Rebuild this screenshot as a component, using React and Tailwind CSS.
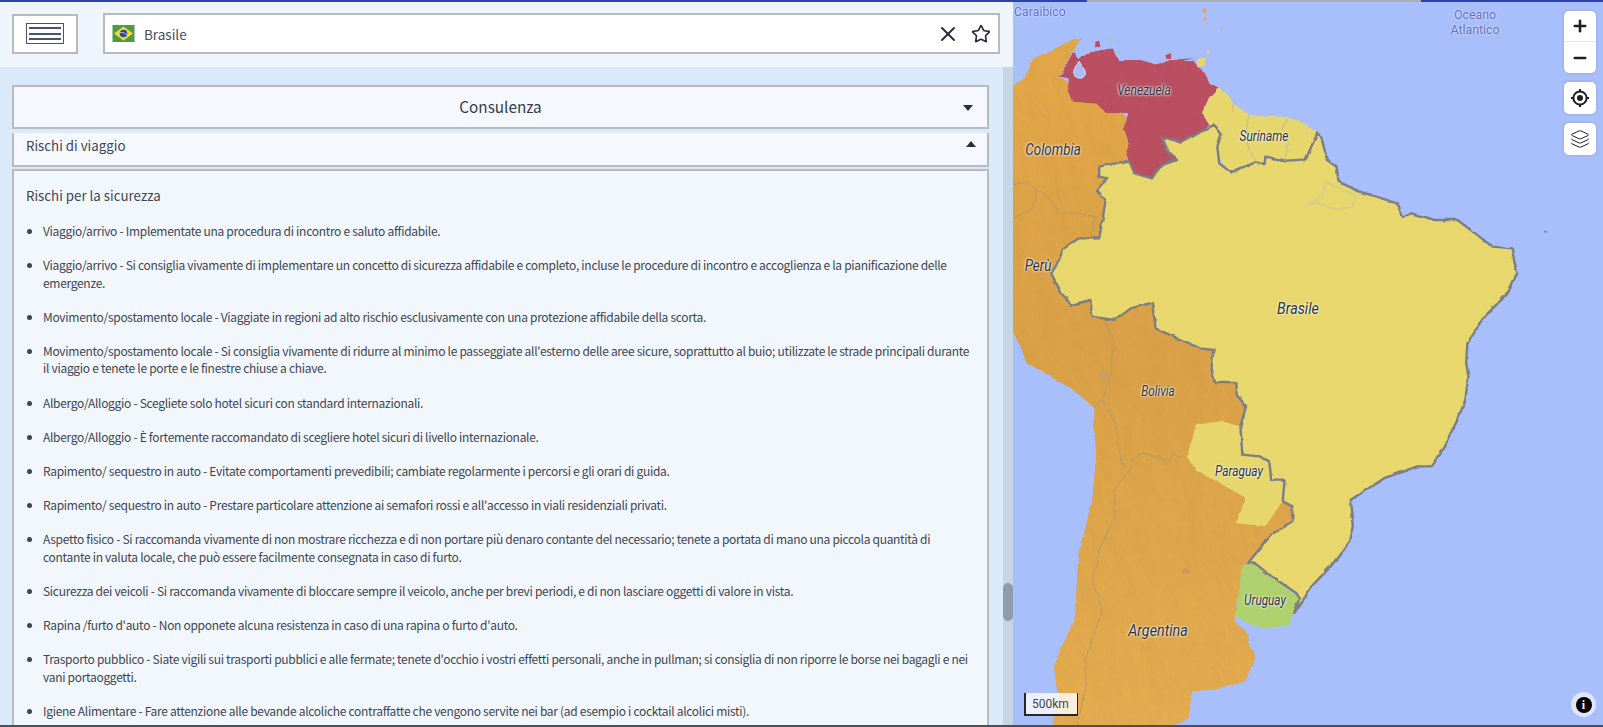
import React from 'react';
import { X, Star, Plus, Minus, Layers } from 'lucide-react';

const items = [
  "Viaggio/arrivo - Implementate una procedura di incontro e saluto affidabile.",
  "Viaggio/arrivo - Si consiglia vivamente di implementare un concetto di sicurezza affidabile e completo, incluse le procedure di incontro e accoglienza e la pianificazione delle\nemergenze.",
  "Movimento/spostamento locale - Viaggiate in regioni ad alto rischio esclusivamente con una protezione affidabile della scorta.",
  "Movimento/spostamento locale - Si consiglia vivamente di ridurre al minimo le passeggiate all'esterno delle aree sicure, soprattutto al buio; utilizzate le strade principali durante\nil viaggio e tenete le porte e le finestre chiuse a chiave.",
  "Albergo/Alloggio - Scegliete solo hotel sicuri con standard internazionali.",
  "Albergo/Alloggio - È fortemente raccomandato di scegliere hotel sicuri di livello internazionale.",
  "Rapimento/ sequestro in auto - Evitate comportamenti prevedibili; cambiate regolarmente i percorsi e gli orari di guida.",
  "Rapimento/ sequestro in auto - Prestare particolare attenzione ai semafori rossi e all'accesso in viali residenziali privati.",
  "Aspetto fisico - Si raccomanda vivamente di non mostrare ricchezza e di non portare più denaro contante del necessario; tenete a portata di mano una piccola quantità di\ncontante in valuta locale, che può essere facilmente consegnata in caso di furto.",
  "Sicurezza dei veicoli - Si raccomanda vivamente di bloccare sempre il veicolo, anche per brevi periodi, e di non lasciare oggetti di valore in vista.",
  "Rapina /furto d'auto - Non opponete alcuna resistenza in caso di una rapina o furto d'auto.",
  "Trasporto pubblico - Siate vigili sui trasporti pubblici e alle fermate; tenete d'occhio i vostri effetti personali, anche in pullman; si consiglia di non riporre le borse nei bagagli e nei\nvani portaoggetti.",
  "Igiene Alimentare - Fare attenzione alle bevande alcoliche contraffatte che vengono servite nei bar (ad esempio i cocktail alcolici misti).",
];

// map shapes: x is zoomed 2.6x, y 3x; second list is the southern half (y + 1089)
const S = 1089;
const pts = (north, south = []) =>
  [...north, ...south.map(([x, y]) => [x, y + S])].map((p) => p.join(',')).join(' ');

const orange = pts(
  [[30, 265], [70, 225], [85, 175], [125, 155], [190, 118], [218, 115], [195, 140], [155, 230], [400, 400], [700, 1000]],
  [[700, 300], [740, 420], [760, 430], [760, 475], [710, 510], [680, 550], [645, 600], [630, 610], [615, 720], [610, 775], [650, 815], [645, 840], [665, 880], [640, 950], [560, 980], [500, 985], [490, 1070], [455, 1085], [405, 1095], [135, 1095], [150, 1000], [140, 910], [165, 840], [195, 760], [200, 640], [205, 560], [225, 480], [240, 400], [250, 280], [245, 200], [245, 135], [210, 95], [130, 40], [70, 0]]
).concat(' 30,985');

const venezuela = pts([[155, 230], [190, 155], [205, 175], [215, 165], [250, 155], [290, 148], [310, 180], [370, 180], [410, 195], [440, 180], [500, 180], [530, 215], [545, 250], [568, 262], [545, 290], [525, 340], [545, 375], [520, 400], [470, 428], [420, 410], [440, 460], [460, 480], [420, 495], [395, 535], [350, 520], [325, 455], [335, 430], [322, 385], [333, 340], [275, 340], [255, 312], [190, 305], [178, 270], [178, 235]]);

const guianas = pts([[568, 262], [545, 290], [525, 340], [545, 375], [570, 400], [565, 470], [600, 517], [660, 490], [690, 490], [690, 470], [745, 482], [795, 478], [825, 400], [790, 370], [745, 350], [690, 350], [650, 345], [610, 315], [590, 280]]);

const paraguay = pts([], [[510, 185], [575, 175], [625, 190], [630, 275], [675, 280], [700, 295], [705, 350], [740, 350], [735, 415], [690, 490], [610, 480], [640, 405], [570, 360], [510, 320], [485, 285]]);

const uruguay = pts([], [[630, 610], [660, 598], [700, 635], [778, 705], [765, 750], [745, 790], [690, 800], [640, 780], [612, 755], [620, 680]]);

const brazil = pts(
  [[825, 400], [795, 478], [745, 482], [690, 470], [688, 492], [660, 488], [600, 517], [570, 490], [565, 440], [575, 405], [555, 375], [525, 395], [470, 428], [420, 410], [440, 460], [460, 480], [420, 495], [395, 535], [350, 520], [335, 482], [258, 500], [258, 530], [278, 535], [252, 570], [275, 600], [258, 715], [205, 715], [165, 745], [150, 790], [133, 820], [160, 880], [185, 915], [235, 900], [240, 950], [300, 960], [340, 925], [395, 908], [405, 985], [470, 1020], [520, 1045], [555, 1050]],
  [[550, 15], [558, 60], [615, 60], [615, 95], [640, 130], [625, 190], [630, 275], [675, 280], [700, 295], [705, 350], [740, 350], [735, 415], [760, 430], [760, 475], [710, 510], [680, 550], [645, 600], [660, 598], [700, 635], [770, 690], [778, 705], [765, 750], [800, 690], [810, 670], [860, 610], [910, 535], [920, 490], [912, 410], [1000, 345], [1085, 310], [1120, 310], [1150, 260], [1190, 170], [1210, 110], [1218, 40], [1212, 0]]
).concat(' ', pts([[1215, 1030], [1260, 950], [1320, 880], [1345, 820], [1330, 745], [1280, 740], [1190, 660], [1130, 660], [1070, 640], [1045, 650], [1035, 610], [935, 575], [880, 545], [875, 500], [850, 480], [835, 410]]));

const borders = [
  pts([[30, 560], [70, 545], [95, 570], [125, 590], [155, 640], [200, 640], [250, 650], [235, 705]]),
  pts([[30, 655], [85, 625], [95, 570]]),
  pts([[270, 960], [295, 1020], [290, 1089]], [[285, 60], [265, 110], [300, 180], [320, 310], [370, 270], [420, 285], [430, 305], [445, 275], [485, 285]]),
  pts([], [[245, 135], [265, 110]]),
  pts([], [[345, 310], [300, 380], [295, 470], [260, 560], [240, 650], [265, 740], [235, 850], [220, 890], [225, 970], [200, 1090]]),
  pts([[605, 335], [610, 315]]),
  pts([[650, 345], [640, 390], [645, 440], [665, 490]]),
  pts([[750, 352], [735, 390], [750, 430], [740, 480]]),
];

const labels = [
  ['Venezuela', 'left-[131px] top-[90px] text-[14px] scale-x-[0.86]'],
  ['Suriname', 'left-[251px] top-[136px] text-[14px] scale-x-[0.85]'],
  ['Colombia', 'left-[40px] top-[150px] text-[16px] scale-x-[0.84]'],
  ['Perù', 'left-[25px] top-[266px] text-[16px] scale-x-[0.84]'],
  ['Brasile', 'left-[285px] top-[308px] text-[17px] scale-x-[0.84]'],
  ['Bolivia', 'left-[145px] top-[391px] text-[14px] scale-x-[0.84]'],
  ['Paraguay', 'left-[226px] top-[471px] text-[14px] scale-x-[0.85]'],
  ['Uruguay', 'left-[252px] top-[600px] text-[14px] scale-x-[0.84]'],
  ['Argentina', 'left-[145px] top-[630px] text-[17px] scale-x-[0.84]'],
];

const BrazilFlag = () => (
  <svg viewBox="0 0 22 17" className="w-[23px] h-[17px]">
    <rect width="22" height="17" fill="#4f9a45" />
    <polygon points="11,1.5 20.5,8.5 11,15.5 1.5,8.5" fill="#f4dc32" />
    <circle cx="11" cy="8.5" r="3.8" fill="#2f4a9c" />
    <path d="M7.5 7.5 C10 7 12.5 8 14.5 10" stroke="#e8eef5" strokeWidth="0.7" fill="none" />
  </svg>
);

const Caret = ({ up }) => (
  <svg viewBox="0 0 10 6" className="w-[10px] h-[6px]" fill="#272d3c">
    <polygon points={up ? '5,0 10,6 0,6' : '0,0 10,0 5,6'} />
  </svg>
);

const Locate = () => (
  <svg viewBox="0 0 20 20" className="w-[20px] h-[20px]" fill="none" stroke="#1c1f26">
    <circle cx="10" cy="10" r="6.6" strokeWidth="2" />
    <circle cx="10" cy="10" r="3" fill="#1c1f26" stroke="none" />
    <path d="M10 1v2.5M10 16.5V19M1 10h2.5M16.5 10H19" strokeWidth="2" />
  </svg>
);

const MapView = () => (
  <div className="relative flex-1 h-full overflow-hidden bg-[#a9bffb]">
    <svg viewBox="33.8 0 1534 2181" preserveAspectRatio="none" className="absolute inset-0 w-full h-full">
      <defs>
        <linearGradient id="land" x1="0" y1="0" x2="0" y2="1">
          <stop offset="0" stopColor="#e0a646" />
          <stop offset="0.45" stopColor="#d89f46" />
          <stop offset="1" stopColor="#e2aa4e" />
        </linearGradient>
        <filter id="relief" x="0" y="0" width="100%" height="100%">
          <feTurbulence type="fractalNoise" baseFrequency="0.012 0.006" numOctaves="4" seed="7" result="n" />
          <feDiffuseLighting in="n" surfaceScale="3" diffuseConstant="1.03" lightingColor="#ffffff" result="l">
            <feDistantLight azimuth="300" elevation="68" />
          </feDiffuseLighting>
          <feComposite in="SourceGraphic" in2="l" operator="arithmetic" k1="1.05" k2="0" k3="0" k4="0" result="c" />
          <feComposite in="c" in2="SourceAlpha" operator="in" />
        </filter>
        <filter id="rough" x="-2%" y="-2%" width="104%" height="104%">
          <feTurbulence type="fractalNoise" baseFrequency="0.03" numOctaves="3" seed="3" result="d" />
          <feDisplacementMap in="SourceGraphic" in2="d" scale="10" xChannelSelector="R" yChannelSelector="G" />
        </filter>
      </defs>
      <g filter="url(#rough)">
        <polygon points={orange} fill="url(#land)" filter="url(#relief)" />
        {borders.slice(0, 5).map((b) => (
          <polyline key={b} points={b} fill="none" stroke="#b79a63" strokeWidth="1" vectorEffect="non-scaling-stroke" />
        ))}
        <ellipse cx="270" cy="1129" rx="14" ry="18" fill="#c2a068" opacity="0.6" />
        <ellipse cx="483" cy="1713" rx="11" ry="8" fill="#c99a58" />
        <polygon points={venezuela} fill="#ba4f61" filter="url(#relief)" />
        <path d="M205 180 C200 195 188 210 192 225 C200 238 218 238 222 222 C222 205 212 192 205 180Z" fill="#a9bffb" stroke="#d8dcf0" strokeWidth="1" vectorEffect="non-scaling-stroke" />
        <polygon points={guianas} fill="#e6d66c" />
        <polygon points={paraguay} fill="#e6d66c" />
        <polygon points={uruguay} fill="#afd16d" />
        <polygon points={brazil} fill="#e7d76c" stroke="#7b7e86" strokeWidth="2.4" strokeLinejoin="round" vectorEffect="non-scaling-stroke" />
        {borders.slice(5).map((b) => (
          <polyline key={b} points={b} fill="none" stroke="#c4b98a" strokeWidth="1" vectorEffect="non-scaling-stroke" />
        ))}
        <path d="M800 612 L835 590 L850 545 L870 560 L925 585 L915 620 L880 628 L850 622 L825 608Z" fill="none" stroke="#d9cd84" strokeWidth="2" vectorEffect="non-scaling-stroke" />
      </g>
      {/* islands */}
      <polygon points="248,125 258,122 261,140 247,142" fill="#ba4f61" />
      <polygon points="512,178 534,172 534,198 512,200" fill="#e6d66c" />
      <polygon points="430,165 445,160 445,178 432,176" fill="#ba4f61" />
      <polygon points="460,178 505,175 470,184" fill="#ba4f61" />
      <polygon points="282,115 292,120 288,128" fill="#afd16d" />
      <polygon points="304,118 311,124 305,127" fill="#afd16d" />
      <polygon points="528,22 538,30 530,42" fill="#e1a648" />
      <polygon points="530,52 538,56 532,68" fill="#e1a648" />
      <polygon points="574,82 580,86 576,92" fill="#e1a648" />
      <polygon points="540,152 548,155 538,162" fill="#e6d66c" />
      <circle cx="1418" cy="695" r="3" fill="#6b7280" />
    </svg>

    {/* sea names */}
    <div className="absolute left-[1px] top-[-11px] text-center text-[13px] leading-[15px] scale-x-[0.95] origin-left text-[#5f6fd0] font-['Roboto',sans-serif] [text-shadow:0_0_2px_#fff]">
      Mare
      <br />
      Caraibico
    </div>
    <div className="absolute left-[462px] top-[7px] -translate-x-1/2 text-center text-[13px] leading-[15px] scale-x-[0.95] text-[#5f6fd0] font-['Roboto',sans-serif] [text-shadow:0_0_2px_#fff]">
      Oceano
      <br />
      Atlantico
    </div>

    {labels.map(([name, cls]) => (
      <div
        key={name}
        className={`absolute -translate-x-1/2 -translate-y-1/2 italic leading-none text-[#2a3040] font-['Roboto',sans-serif] [text-shadow:0_0_2px_#fff,0_0_3px_#fff] ${cls}`}
      >
        {name}
      </div>
    ))}

    {/* map controls */}
    <div className="absolute right-[7px] top-[11px] flex flex-col gap-[9px] w-[32px] text-[#1c1f26]">
      <div className="flex flex-col rounded-[5px] bg-white ring-2 ring-[#a3b6ef]">
        <div className="h-[31px] flex items-center justify-center border-b border-[#e5e7eb]">
          <Plus size={18} strokeWidth={3.4} />
        </div>
        <div className="h-[31px] flex items-center justify-center">
          <Minus size={18} strokeWidth={3.4} />
        </div>
      </div>
      <div className="h-[32px] flex items-center justify-center rounded-[5px] bg-white ring-2 ring-[#a3b6ef]">
        <Locate />
      </div>
      <div className="h-[32px] flex items-center justify-center rounded-[5px] bg-white ring-2 ring-[#a3b6ef]">
        <Layers size={20} strokeWidth={1.2} />
      </div>
    </div>

    {/* scale */}
    <div className="absolute left-[11px] top-[693px] w-[54px] h-[23px] flex items-center pl-[6px] bg-white/80 border-l-2 border-b-2 border-r border-[#23262e] text-[12px] text-[#444] font-['Roboto',sans-serif]">
      500km
    </div>

    {/* attribution */}
    <div className="absolute right-[7px] bottom-[10px] w-[25px] h-[25px] rounded-full bg-[#dfe6fb] flex items-center justify-center">
      <div className="w-[16px] h-[16px] rounded-full bg-black flex items-center justify-center text-white">
        <span className="text-[12px] leading-none font-bold font-['Liberation_Serif',serif]">i</span>
      </div>
    </div>
  </div>
);

const App = () => {
  return (
    <div className="relative flex h-[727px] w-full overflow-hidden font-['Noto_Sans_CJK_SC',sans-serif] text-[#3e4452]">
      <div className="w-[1013px] h-full flex flex-col">
        {/* search header */}
        <header className="h-[67px] shrink-0 flex items-center gap-[25px] pl-[12px] pr-[13px] bg-[#eef5fd]">
          <button className="w-[66px] h-[40px] flex items-center justify-center bg-white border-2 border-[#b7babf]">
            <span className="w-[38px] h-[21px] flex flex-col justify-between py-[3px] px-[2px] border border-[#4a5270]">
              <span className="h-[2px] bg-[#4a5270]" />
              <span className="h-[2px] bg-[#4a5270]" />
              <span className="h-[2px] bg-[#4a5270]" />
            </span>
          </button>
          <div className="flex-1 h-[41px] flex items-center pl-[7px] pr-[7px] bg-white border-2 border-[#b7babf]">
            <BrazilFlag />
            <span className="ml-[9px] text-[13.5px] leading-[18px] text-[#4a5060]">Brasile</span>
            <X size={24} strokeWidth={2} className="ml-auto text-[#272d3c]" />
            <Star size={20} strokeWidth={2} className="ml-[11px] text-[#272d3c]" />
          </div>
        </header>

        {/* scrolling panel */}
        <div className="flex-1 min-h-0 flex bg-[#dbeafa]">
          <div className="flex-1 min-w-0 pl-[12px] pr-[14px] pt-[18px] flex flex-col">
            <div className="h-[44px] shrink-0 flex items-center justify-center relative pb-[2px] bg-[#f5f9ff] border-2 border-[#b7babf] text-[15.3px] leading-[22px] text-[#353b49]">
              Consulenza
              <span className="absolute right-[14px] top-[18px]">
                <Caret />
              </span>
            </div>
            <div className="mt-[4px] h-[34px] shrink-0 flex items-start justify-between pl-[12px] pr-[11px] bg-[#f5f9ff] border-x-2 border-b-2 border-[#b7babf] text-[13.3px]">
              <span className="leading-[26px]">Rischi di viaggio</span>
              <span className="mt-[8px]">
                <Caret up />
              </span>
            </div>
            <div className="mt-[2px] flex-1 min-h-0 overflow-hidden bg-[#f2f7fe] border-x-2 border-t-2 border-[#b7babf] pl-[12px] pr-[12px] pt-[15px]">
              <h3 className="text-[13.3px] leading-[20px] font-normal">Rischi per la sicurezza</h3>
              <ul className="mt-[16px] list-disc pl-[17px] text-[12px] leading-[17.4px] tracking-[-0.3px]">
                {items.map((t) => (
                  <li key={t} className="mb-[16.8px] whitespace-pre">
                    {t}
                  </li>
                ))}
              </ul>
            </div>
          </div>
          <div className="relative w-[10px] shrink-0 bg-[#c5d5e3]">
            <div className="absolute left-0 top-[516px] w-[10px] h-[38px] rounded-full bg-[#8d9dab]" />
          </div>
        </div>
      </div>

      <MapView />

      {/* loading bar + bottom edge */}
      <div className="absolute left-0 right-0 top-0 h-[2px] flex pointer-events-none">
        <div className="w-[1087px] bg-[#2f43a6]" />
        <div className="w-[334px] bg-[#a9adb8]" />
        <div className="flex-1 bg-[#2f43a6]" />
      </div>
      <div className="absolute left-0 right-0 bottom-0 h-[2px] bg-[#4a4f58] pointer-events-none" />
    </div>
  );
};

export default App;
